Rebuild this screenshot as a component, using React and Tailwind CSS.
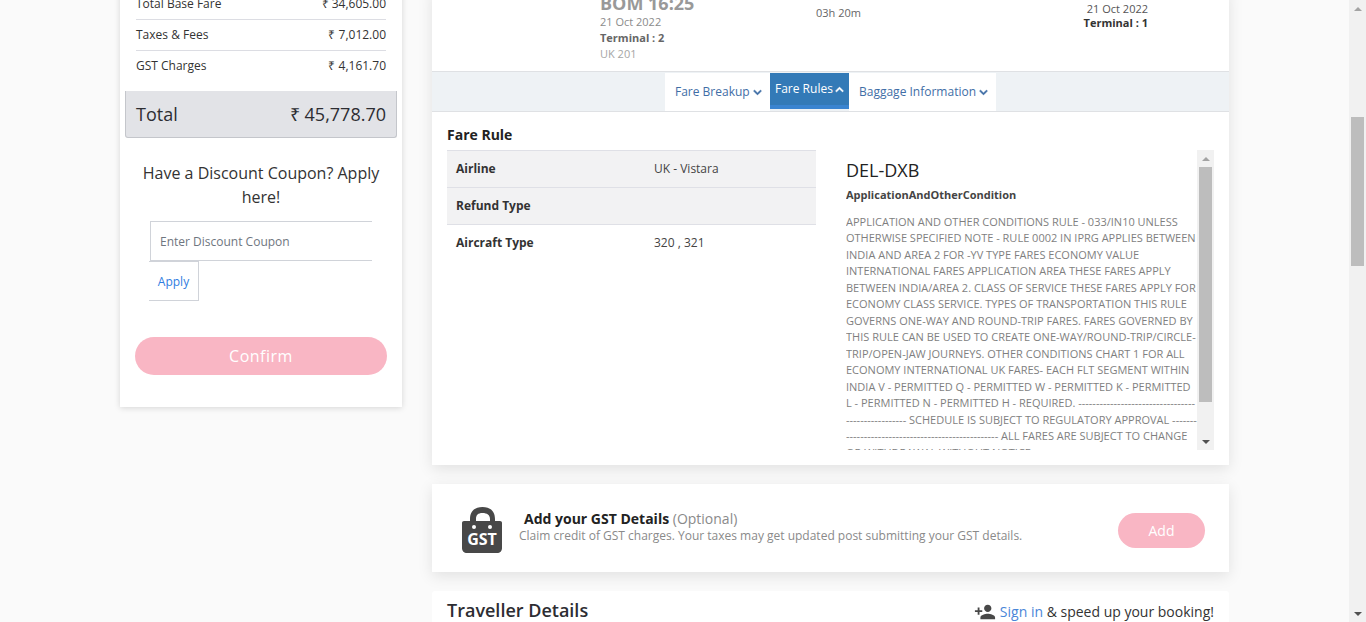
import React from 'react';
import { FaChevronDown, FaChevronUp } from 'react-icons/fa';
import { MdPersonAdd } from 'react-icons/md';

const ruleLines = [
  'APPLICATION AND OTHER CONDITIONS RULE - 033/IN10 UNLESS',
  'OTHERWISE SPECIFIED NOTE - RULE 0002 IN IPRG APPLIES BETWEEN',
  'INDIA AND AREA 2 FOR -YV TYPE FARES ECONOMY VALUE',
  'INTERNATIONAL FARES APPLICATION AREA THESE FARES APPLY',
  'BETWEEN INDIA/AREA 2. CLASS OF SERVICE THESE FARES APPLY FOR',
  'ECONOMY CLASS SERVICE. TYPES OF TRANSPORTATION THIS RULE',
  'GOVERNS ONE-WAY AND ROUND-TRIP FARES. FARES GOVERNED BY',
  'THIS RULE CAN BE USED TO CREATE ONE-WAY/ROUND-TRIP/CIRCLE-',
  'TRIP/OPEN-JAW JOURNEYS. OTHER CONDITIONS CHART 1 FOR ALL',
  'ECONOMY INTERNATIONAL UK FARES- EACH FLT SEGMENT WITHIN',
  'INDIA V - PERMITTED Q - PERMITTED W - PERMITTED K - PERMITTED',
  'L - PERMITTED N - PERMITTED H - REQUIRED. ---------------------------------',
  '----------------- SCHEDULE IS SUBJECT TO REGULATORY APPROVAL --------',
  '------------------------------------------- ALL FARES ARE SUBJECT TO CHANGE',
  'OR WITHDRAWAL WITHOUT NOTICE',
];

const fareRows = [
  { label: 'Total Base Fare', value: '₹ 34,605.00' },
  { label: 'Taxes & Fees', value: '₹ 7,012.00' },
  { label: 'GST Charges', value: '₹ 4,161.70' },
];

const infoRows = [
  { label: 'Airline', value: 'UK - Vistara', shaded: true },
  { label: 'Refund Type', value: '', shaded: true },
  { label: 'Aircraft Type', value: '320 , 321', shaded: false },
];

const Arrow = ({ up }) => (
  <div className="flex h-[17px] w-[17px] items-center justify-center">
    <div
      className={`h-0 w-0 border-x-[4px] border-x-transparent ${
        up ? 'border-b-[4px] border-b-[#a3a3a3]' : 'border-t-[4px] border-t-[#505050]'
      }`}
    ></div>
  </div>
);

const FareSummary = () => (
  <div className="-mt-[11px] w-[282px] shrink-0 bg-white px-[5px] pb-[32px] shadow-[0_1px_6px_rgba(0,0,0,0.15)]">
    <div className="px-[11px] pb-[10px]">
      {fareRows.map((row, i) => (
        <div
          key={row.label}
          className={`flex items-center justify-between text-[12px] text-[#333] ${
            i < 2 ? 'h-[31px] border-b border-[#dcdde3]' : 'h-[30px]'
          }`}
        >
          <span>{row.label}</span>
          <span>{row.value}</span>
        </div>
      ))}
    </div>
    <div className="flex h-[47px] items-center justify-between rounded-b-[3px] border-x border-b border-[#c4c6cb] bg-[#e2e3e7] px-[10px] text-[#2d2d32]">
      <span className="text-[18px]">Total</span>
      <span className="text-[18px]">₹ 45,778.70</span>
    </div>
    <div className="mt-[23px] px-[15px] text-center text-[16px] leading-[24px] text-[#333]">
      Have a Discount Coupon? Apply here!
    </div>
    <div className="mt-[12px] pl-[25px]">
      <div className="flex h-[40px] w-[222px] items-center border-y border-l border-[#d0d3d9] pl-[9px] pt-[2px] text-[12px] text-[#6f7680]">
        Enter Discount Coupon
      </div>
      <div className="-ml-px flex h-[40px] w-[50px] items-center justify-center border-y border-r border-[#d0d3d9] pt-[2px] text-[12px] text-[#2f7de1]">
        Apply
      </div>
    </div>
    <div className="mt-[36px] flex h-[38px] ml-[10px] w-[252px] items-center justify-center rounded-full bg-[#f9b6c4] text-[16px] font-medium tracking-[0.5px] text-white">
      Confirm
    </div>
  </div>
);

const FlightRow = () => (
  <div className="flex h-[83px] border-b border-[#dfe1e4] pl-[168px]">
    <div className="w-[216px] pt-[4px]">
      <div className="text-[18px] font-bold leading-[21px] text-[#999]">BOM 16:25</div>
      <div className="text-[11px] leading-[16px] text-[#8b8b8b]">21 Oct 2022</div>
      <div className="text-[11px] font-bold leading-[16px] text-[#666]">Terminal : 2</div>
      <div className="text-[11px] leading-[16px] text-[#a5a5a5]">UK 201</div>
    </div>
    <div className="w-[332px] pt-[16px] text-[11px] leading-[15px] text-[#666]">03h 20m</div>
    <div className="w-[0] pt-[13px] text-[11px] leading-[14px]">
      <div className="w-[100px] -translate-x-[100px] text-right text-[#555]">21 Oct 2022</div>
      <div className="w-[100px] -translate-x-[100px] text-right font-bold text-[#333]">Terminal : 1</div>
    </div>
  </div>
);

const FareTabs = () => (
  <div className="flex h-[40px] justify-center border-b border-[#dfe1e4] bg-[#eef2f5] pt-px">
    <div className="flex h-[38px] w-[105px] items-center gap-[3px] bg-white pl-[10px] text-[12px] text-[#3f6ea6]">
      Fare Breakup <FaChevronDown className="h-[9px] w-[9px] stroke-[30px]" />
    </div>
    <div className="flex h-[36px] w-[79px] items-center gap-[2px] border-b-[4px] border-[#3a84d0] bg-[#337ab7] pl-[5px] text-[12px] text-white">
      Fare Rules <FaChevronUp className="h-[9px] w-[9px] stroke-[30px]" />
    </div>
    <div className="flex h-[38px] w-[147px] items-center gap-[3px] bg-white pl-[10px] text-[12px] text-[#3f6ea6]">
      Baggage Information <FaChevronDown className="h-[9px] w-[9px] stroke-[30px]" />
    </div>
  </div>
);

const FareRule = () => (
  <div className="flex h-[353px] items-start px-[15px]">
    <div className="w-[369px] shrink-0">
      <h3 className="mt-[13px] h-[25px] text-[14px] font-bold leading-[20px] text-[#222]">Fare Rule</h3>
      {infoRows.map((row) => (
        <div
          key={row.label}
          className={`flex h-[37px] items-center border-t border-[#dfe0e6] pl-[9px] text-[12px] ${
            row.shaded ? 'bg-[#f2f2f3]' : ''
          }`}
        >
          <span className="w-[198px] font-bold text-[#333]">{row.label}</span>
          <span className="text-[#444]">{row.value}</span>
        </div>
      ))}
    </div>
    <div className="ml-[30px] mt-[38px] flex h-[300px] w-[368px]">
      <div className="w-[351px] overflow-hidden">
        <div className="mt-[8px] text-[18px] leading-[24px] text-[#222]">DEL-DXB</div>
        <div className="mt-[5px] text-[11px] font-bold leading-[15px] text-[#444]">ApplicationAndOtherCondition</div>
        <div className="mt-[11.5px] whitespace-nowrap text-[11px] leading-[16.5px] text-[#7f7f7f]">
          {ruleLines.map((line) => (
            <div key={line}>{line}</div>
          ))}
        </div>
      </div>
      <div className="flex h-full w-[17px] flex-col bg-[#f1f1f1]">
        <Arrow up />
        <div className="mx-auto h-[235px] w-[13px] bg-[#bdbdbd]"></div>
        <div className="flex-1"></div>
        <Arrow />
      </div>
    </div>
  </div>
);

const GstIcon = () => (
  <svg viewBox="0 0 40 46" className="h-[46px] w-[40px] shrink-0">
    <path d="M8 15 V12 C8 4 13 0 20.500 0 C28 0 33 4 33 12 V15 H28 V12 C28 8 25 6 20.500 6 C16 6 14 8 14 12 V15 Z" fill="#484848" />
    <path d="M2 14 H38 C39.200 14 40 14.800 40 16 V41 C40 44 38 46 35 46 H5 C2 46 0 44 0 41 V16 C0 14.800 0.800 14 2 14 Z" fill="#484848" />
    <circle cx="12" cy="20" r="2" fill="#fff" />
    <circle cx="28" cy="20" r="2" fill="#fff" />
    <text x="20" y="38" textAnchor="middle" fontSize="16" fontWeight="700" fill="#fff" fontFamily="'Open Sans', sans-serif">GST</text>
  </svg>
);

const GstCard = () => (
  <div className="mt-[19px] flex h-[88px] items-center bg-white pl-[30px] pr-[24px] pt-[4px] shadow-[0_4px_14px_rgba(0,0,0,0.1)]">
    <GstIcon />
    <div className="ml-[17px] flex-1 pb-[7px]">
      <div className="pl-[5px] text-[14px] leading-[19px]">
        <span className="font-bold text-[#222]">Add your GST Details</span>{' '}
        <span className="text-[#8a8a8a]">(Optional)</span>
      </div>
      <div className="text-[12px] leading-[16px] text-[#8a8a8a]">
        Claim credit of GST charges. Your taxes may get updated post submitting your GST details.
      </div>
    </div>
    <div className="flex h-[35px] w-[87px] items-center justify-center rounded-full bg-[#f9b6c4] text-[14px] text-white">
      Add
    </div>
  </div>
);

const TravellerHeader = () => (
  <div className="mt-[19px] flex h-[60px] items-start justify-between rounded-t-[3px] bg-white px-[15px] pt-[7px]">
    <span className="text-[18px] font-semibold leading-[25px] text-[#2d2d32]">Traveller Details</span>
    <span className="flex items-center gap-[4px] pt-[2px] text-[14px] leading-[24px] text-[#333]">
      <MdPersonAdd className="h-[22px] w-[22px] text-[#484848]" />
      <span>
        <span className="text-[#4a86d8]">Sign in</span> &amp; speed up your booking!
      </span>
    </span>
  </div>
);

const App = () => (
  <div className="flex h-[622px] overflow-hidden bg-[#fafafa] font-['Open_Sans',sans-serif]">
    <div className="flex flex-1 items-start gap-[30px] pl-[120px]">
      <FareSummary />
      <div className="w-[797px] shrink-0">
        <div className="-mt-[11px] bg-white shadow-[0_4px_14px_rgba(0,0,0,0.1)]">
          <FlightRow />
          <FareTabs />
          <FareRule />
        </div>
        <GstCard />
        <TravellerHeader />
      </div>
    </div>
    <div className="flex h-full w-[17px] shrink-0 flex-col bg-[#f1f1f1]">
      <Arrow up />
      <div className="mx-auto mt-[100px] h-[149px] w-[13px] bg-[#bdbdbd]"></div>
      <div className="flex-1"></div>
      <Arrow />
    </div>
  </div>
);

export default App;
